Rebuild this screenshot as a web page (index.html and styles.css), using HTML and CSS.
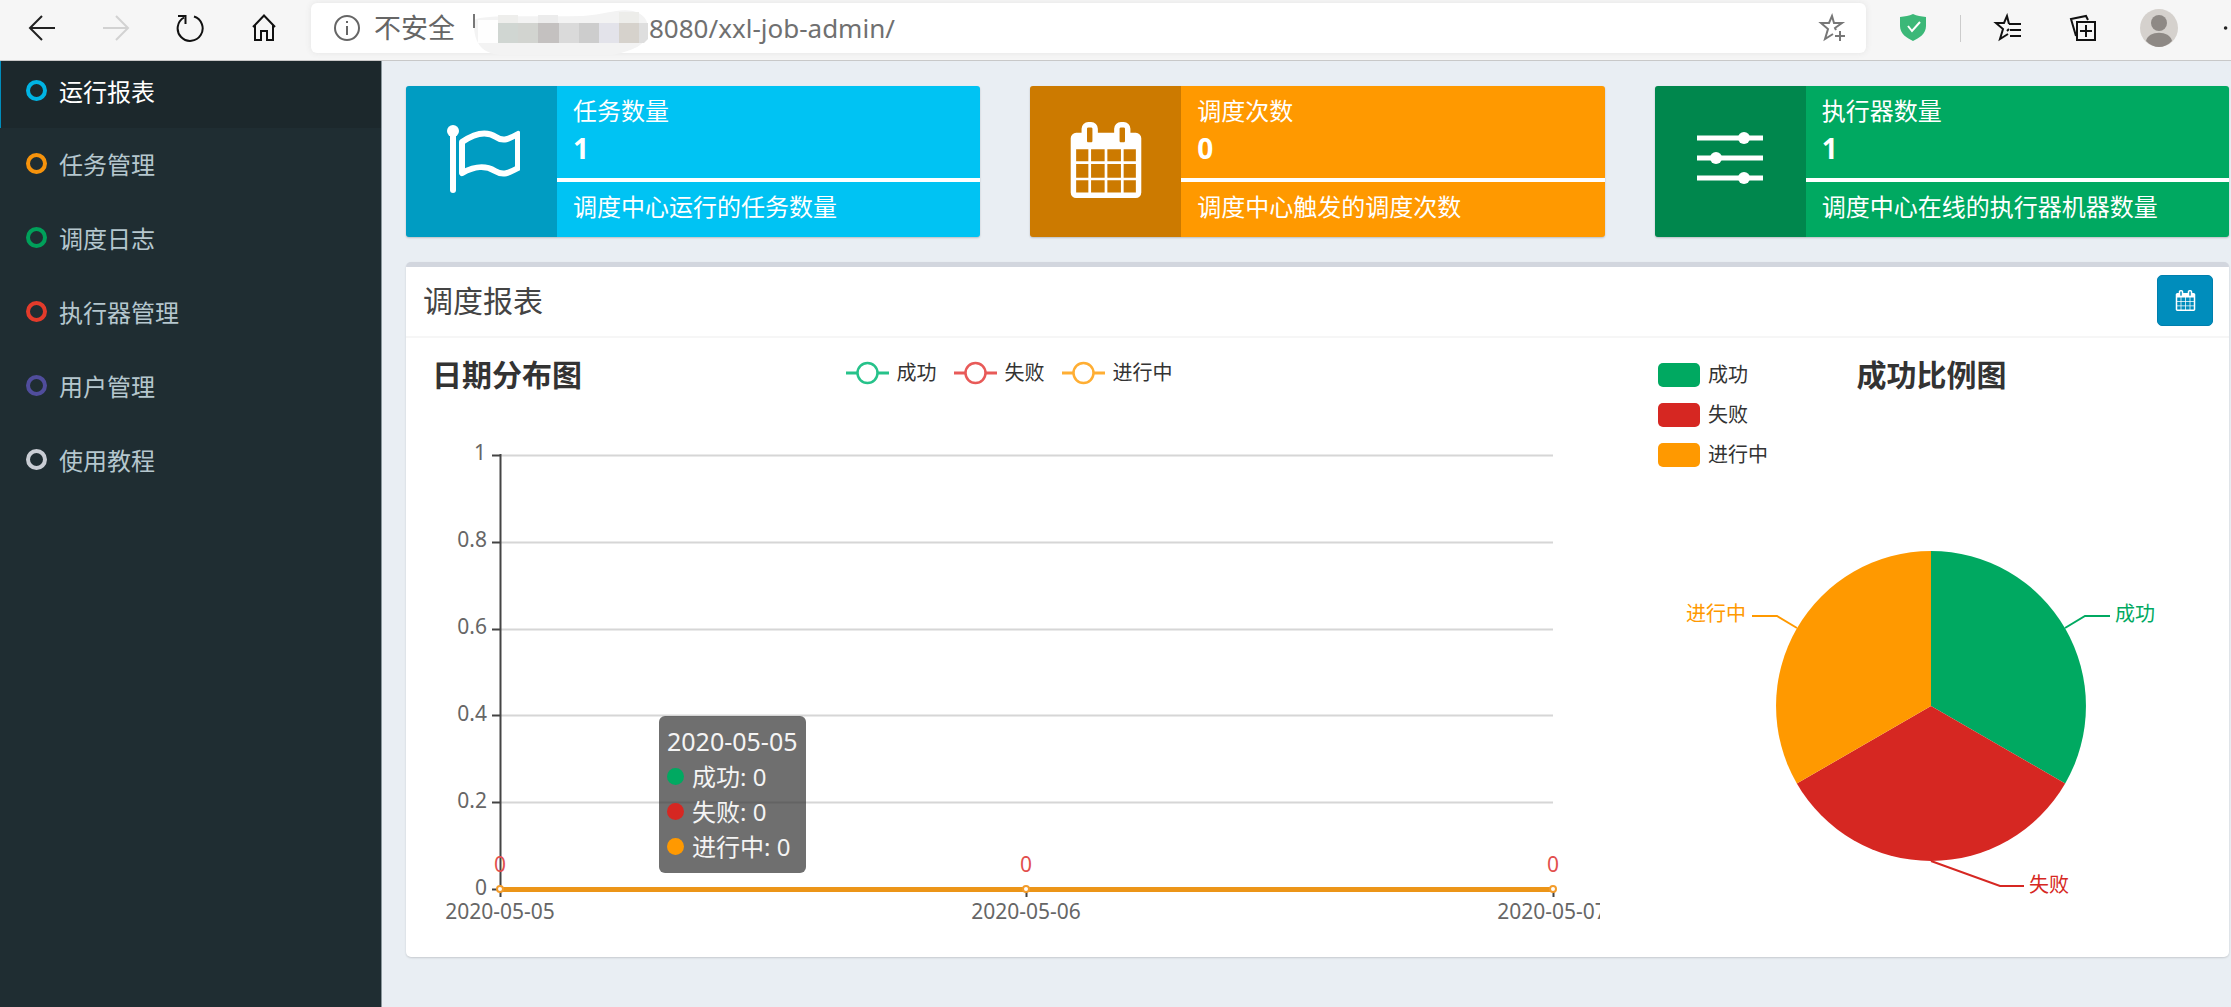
FILE: index.html
```html
<!DOCTYPE html>
<html lang="zh-CN">
<head>
<meta charset="utf-8">
<title>任务调度中心</title>
<link rel="stylesheet" href="styles.css">
</head>
<body>
<header class="toolbar">
  <nav class="toolbar-nav" aria-label="浏览器">
    <button class="tool" type="button" aria-label="后退"><svg width="30" height="30" viewBox="0 0 30 30"><path d="M28 15H3M15 3L3 15l12 12" stroke="#222" stroke-width="2"/></svg></button>
    <button class="tool" type="button" aria-label="前进" disabled><svg width="30" height="30" viewBox="0 0 30 30"><path d="M2 15h25M15 3l12 12-12 12" stroke="#d2d2d2" stroke-width="2"/></svg></button>
    <button class="tool" type="button" aria-label="刷新"><svg width="30" height="30" viewBox="0 0 30 30"><path d="M19 3.500A12.500 12.500 0 1 1 9 4.500M3 3h7.500v8" stroke="#111" stroke-width="2"/></svg></button>
    <button class="tool" type="button" aria-label="主页"><svg width="30" height="30" viewBox="0 0 30 30"><path d="M4 14L15 2.500 26 14M6 12v15h6v-9h6v9h6V12" stroke="#111" stroke-width="2"/></svg></button>
  </nav>
  <div class="address">
    <svg class="info" width="28" height="28" viewBox="0 0 28 28"><circle cx="14" cy="14" r="12" stroke="#666" stroke-width="2"/><path d="M14 12v9M14 7v2" stroke="#666" stroke-width="2"/></svg>
    <label class="address-label" for="url">不安全</label>
    <svg class="host" width="176" height="56" viewBox="0 0 176 56">
      <path d="M1 21C2 14 60 17 110 16 135 14 145 8 160 11 172 14 176 22 175 32 173 46 160 50 140 55H28C10 54 0 44 1 21z" fill="#f3f3f3"/>
      <path d="M5 20h20v23H5z" fill="#fefefe"/><path d="M1 14v14" stroke="#777" stroke-width="2"/>
      <path d="M25 15h20v8H25z" fill="#eeeeec"/><path d="M65 15h20v8H65z" fill="#ececec"/><path d="M146 12h20v11h-20z" fill="#ededea"/>
      <path d="M25 23h20v20H25z" fill="#d0d6d2"/><path d="M45 23h20v20H45z" fill="#d2d4d0"/><path d="M65 23h21v20H65z" fill="#c4c1c0"/><path d="M86 23h20v20H86z" fill="#dadada"/><path d="M106 23h20v20h-20z" fill="#cdcdcd"/><path d="M126 23h20v20h-20z" fill="#e3e3ea"/><path d="M146 23h20v20h-20z" fill="#d6d2cc"/><path d="M166 23h9v16l-4 4h-5z" fill="#dedede"/>
    </svg>
    <input class="url" id="url" type="text" value="8080/xxl-job-admin/">
    <button class="tool" type="button" aria-label="收藏"><svg width="30" height="30" viewBox="0 0 30 30"><path d="M18 17l-1-2 7-5h-8L14 3l-3 7H3l7 6-3 10 8-5M22 18v10M17 23h10" stroke="#777" stroke-width="2"/></svg></button>
  </div>
  <div class="toolbar-tools">
    <button class="tool" type="button" aria-label="安全防护"><svg width="30" height="30" viewBox="0 0 30 30"><path d="M15 1c4 2 8 2 13 3v9c0 8-7 12-13 15C9 25 2 21 2 13V4c5-1 9-1 13-3z" fill="#3cb878"/><path d="M10 13l4 5 8-9" stroke="#fff" stroke-width="2"/></svg></button>
    <span class="divider"></span>
    <button class="tool" type="button" aria-label="收藏夹"><svg width="30" height="30" viewBox="0 0 30 30"><path d="M16 11h12M17 17h11M17 23h11M16 11L14 3l-3 7H3l7 6-3 10 8-5M14 18l2-2" stroke="#111" stroke-width="2"/></svg></button>
    <button class="tool tool-collections" type="button" aria-label="集锦"><svg width="30" height="30" viewBox="0 0 30 30"><path d="M9 9h18v18H9zM18 12v12M12 18h12M20 7l-2-4L3 6l5 17" stroke="#111" stroke-width="2"/></svg></button>
    <button class="tool tool-avatar" type="button" aria-label="个人资料"><svg width="38" height="38" viewBox="0 0 38 38"><circle cx="19" cy="19" r="19" fill="#d5d1cd"/><circle cx="19" cy="14" r="8" fill="#8e8985"/><path d="M6 32c2-11 24-11 26 0-8 8-18 8-26 0z" fill="#8e8985"/></svg></button>
    <button class="tool tool-more" type="button" aria-label="更多"><svg width="10" height="10" viewBox="0 0 10 10"><circle cx="4" cy="5" r="2" fill="#222"/></svg></button>
  </div>
</header>
<div class="layout">
  <nav class="sidebar" aria-label="主菜单">
    <a class="menu-item active" href="#"><span class="ring ring-aqua"></span>运行报表</a>
    <a class="menu-item" href="#"><span class="ring ring-yellow"></span>任务管理</a>
    <a class="menu-item" href="#"><span class="ring ring-green"></span>调度日志</a>
    <a class="menu-item" href="#"><span class="ring ring-red"></span>执行器管理</a>
    <a class="menu-item" href="#"><span class="ring ring-purple"></span>用户管理</a>
    <a class="menu-item" href="#"><span class="ring ring-gray"></span>使用教程</a>
  </nav>
  <main class="content">
    <section class="cards">
      <article class="card card-aqua">
        <div class="card-icon"><svg width="76" height="76" viewBox="0 0 76 76"><circle cx="9" cy="9" r="6" fill="#fff"/><path d="M9 9v59" stroke="#fff" stroke-width="6" stroke-linecap="round"/><path d="M18 20C31 11 43 9 52 15c7 5 13 2 22-3v34c-9 5-15 8-23 3-10-6-20-5-33 2z" stroke="#fff" stroke-width="6" stroke-linejoin="round"/></svg></div>
        <div class="card-body"><div class="card-title">任务数量</div><div class="card-number">1</div><div class="card-desc">调度中心运行的任务数量</div></div>
      </article>
      <article class="card card-orange">
        <div class="card-icon"><svg width="76" height="76" viewBox="0 0 1792 1792"><path fill="#fff" d="M192 1664h288v-288h-288v288zm352 0h320v-288h-320v288zm-352-352h288v-320h-288v320zm352 0h320v-320h-320v320zm-352-384h288v-288h-288v288zm736 736h320v-288h-320v288zm-384-736h320v-288h-320v288zm768 736h288v-288h-288v288zm-384-352h320v-320h-320v320zm-352-864v-288q0-13-9.500-22.500t-22.500-9.500h-64q-13 0-22.500 9.500t-9.500 22.500v288q0 13 9.500 22.500t22.500 9.500h64q13 0 22.500-9.500t9.500-22.500zm736 864h288v-320h-288v320zm-384-384h320v-288h-320v288zm384 0h288v-288h-288v288zm32-480v-288q0-13-9.500-22.500t-22.500-9.500h-64q-13 0-22.500 9.500t-9.500 22.500v288q0 13 9.500 22.500t22.500 9.500h64q13 0 22.500-9.500t9.500-22.500zm384-64v1280q0 52-38 90t-90 38h-1408q-52 0-90-38t-38-90v-1280q0-52 38-90t90-38h128v-96q0-66 47-113t113-47h64q66 0 113 47t47 113v96h384v-96q0-66 47-113t113-47h64q66 0 113 47t47 113v96h128q52 0 90 38t38 90z"/></svg></div>
        <div class="card-body"><div class="card-title">调度次数</div><div class="card-number">0</div><div class="card-desc">调度中心触发的调度次数</div></div>
      </article>
      <article class="card card-green">
        <div class="card-icon"><svg width="76" height="76" viewBox="0 0 76 76"><path d="M5 16h66M5 36h66M5 56h66" stroke="#fff" stroke-width="5"/><circle cx="52" cy="16" r="6" fill="#fff"/><circle cx="24" cy="36" r="6" fill="#fff"/><circle cx="52" cy="56" r="6" fill="#fff"/></svg></div>
        <div class="card-body"><div class="card-title">执行器数量</div><div class="card-number">1</div><div class="card-desc">调度中心在线的执行器机器数量</div></div>
      </article>
    </section>
    <section class="box">
      <div class="box-header">
        <h3 class="box-title">调度报表</h3>
        <button class="date-button" type="button" aria-label="选择日期"><svg width="21" height="21" viewBox="0 0 1792 1792"><path fill="#fff" d="M192 1664h288v-288h-288v288zm352 0h320v-288h-320v288zm-352-352h288v-320h-288v320zm352 0h320v-320h-320v320zm-352-384h288v-288h-288v288zm736 736h320v-288h-320v288zm-384-736h320v-288h-320v288zm768 736h288v-288h-288v288zm-384-352h320v-320h-320v320zm-352-864v-288q0-13-9.500-22.500t-22.500-9.500h-64q-13 0-22.500 9.500t-9.500 22.500v288q0 13 9.500 22.500t22.500 9.500h64q13 0 22.500-9.500t9.500-22.500zm736 864h288v-320h-288v320zm-384-384h320v-288h-320v288zm384 0h288v-288h-288v288zm32-480v-288q0-13-9.500-22.500t-22.500-9.500h-64q-13 0-22.500 9.500t-9.500 22.500v288q0 13 9.500 22.500t22.500 9.500h64q13 0 22.500-9.500t9.500-22.500zm384-64v1280q0 52-38 90t-90 38h-1408q-52 0-90-38t-38-90v-1280q0-52 38-90t90-38h128v-96q0-66 47-113t113-47h64q66 0 113 47t47 113v96h384v-96q0-66 47-113t113-47h64q66 0 113 47t47 113v96h128q52 0 90 38t38 90z"/></svg></button>
      </div>
      <div class="box-body">
        <div class="chart">
          <div class="line-head">
            <h4 class="chart-title">日期分布图</h4>
            <ul class="line-legend">
              <li><svg width="43" height="26" viewBox="0 0 43 26"><path d="M0 13h43" stroke="#26c28a" stroke-width="3"/><circle cx="21.500" cy="13" r="10" fill="#fff" stroke="#26c28a" stroke-width="2.500"/></svg>成功</li>
              <li><svg width="43" height="26" viewBox="0 0 43 26"><path d="M0 13h43" stroke="#e85a58" stroke-width="3"/><circle cx="21.500" cy="13" r="10" fill="#fff" stroke="#e85a58" stroke-width="2.500"/></svg>失败</li>
              <li><svg width="43" height="26" viewBox="0 0 43 26"><path d="M0 13h43" stroke="#ffae33" stroke-width="3"/><circle cx="21.500" cy="13" r="10" fill="#fff" stroke="#ffae33" stroke-width="2.500"/></svg>进行中</li>
            </ul>
          </div>
          <svg class="plot" viewBox="0 0 1175 545" role="img" aria-label="日期分布图">
            <path class="grid-lines" d="M76 60.500h1052M76 147.500h1052M76 234.500h1052M76 320.500h1052M76 407.500h1052"/>
            <path class="axis-lines" d="M75.500 59v443M67 60.500h9M67 147.500h9M67 234.500h9M67 320.500h9M67 407.500h9M67 494.500h9M601.500 494v8M1128.500 494v8"/>
            <g class="axis-text" text-anchor="end">
              <text x="61" y="65">1</text><text x="62" y="152">0.8</text><text x="62" y="239">0.6</text><text x="62" y="326">0.4</text><text x="62" y="413">0.2</text><text x="62" y="500">0</text>
            </g>
            <g class="axis-text" text-anchor="middle">
              <text x="75" y="524">2020-05-05</text><text x="601" y="524">2020-05-06</text><text x="1127" y="524">2020-05-07</text>
            </g>
            <path d="M75 494.500h1053" stroke="#ec9518" stroke-width="5"/>
            <g fill="#fff" stroke="#f39c2b" stroke-width="2"><circle cx="75" cy="494" r="3"/><circle cx="601" cy="494" r="3"/><circle cx="1128" cy="494" r="3"/></g>
            <g class="point-text" text-anchor="middle"><text x="75" y="477">0</text><text x="601" y="477">0</text><text x="1128" y="477">0</text></g>
          </svg>
          <div class="tooltip">
            <div class="tooltip-date">2020-05-05</div>
            <div><span class="dot dot-green"></span>成功: 0</div>
            <div><span class="dot dot-red"></span>失败: 0</div>
            <div><span class="dot dot-orange"></span>进行中: 0</div>
          </div>
        </div>
        <div class="chart">
          <div class="pie-head">
            <ul class="pie-legend">
              <li><span class="swatch dot-green"></span>成功</li>
              <li><span class="swatch dot-red"></span>失败</li>
              <li><span class="swatch dot-orange"></span>进行中</li>
            </ul>
            <h4 class="chart-title">成功比例图</h4>
          </div>
          <svg class="plot" viewBox="0 0 554 465" role="img" aria-label="成功比例图">
            <path d="M276 231V76A155 155 0 0 1 410.200 308.500z" fill="#00a961"/>
            <path d="M276 231L410.200 308.500A155 155 0 0 1 141.800 308.500z" fill="#d62722"/>
            <path d="M276 231L141.800 308.500A155 155 0 0 1 276 76z" fill="#ff9900"/>
            <g fill="none" stroke-width="2"><path d="M410 153l20-12h25" stroke="#00a961"/><path d="M142 153l-20-12H97" stroke="#ff9900"/><path d="M276 386l69 25h24" stroke="#d62722"/></g>
            <g class="pie-text"><text x="460" y="146" fill="#00a961">成功</text><text x="91" y="146" text-anchor="end" fill="#ff9900">进行中</text><text x="374" y="417" fill="#d62722">失败</text></g>
          </svg>
        </div>
      </div>
    </section>
  </main>
</div>
</body>
</html>
```
FILE: styles.css
```css
* { box-sizing: border-box; }

body {
  margin: 0;
  background: #e9eef3;
  color: #333;
  font-family: "Noto Sans", "Noto Sans CJK SC", sans-serif;
  font-size: 24px;
  overflow-x: hidden;
}

svg { display: block; fill: none; }
h3, h4, ul { margin: 0; padding: 0; }
ul { list-style: none; }
button { border: 0; padding: 0; background: none; }

/* browser toolbar */
.toolbar {
  display: flex;
  align-items: center;
  height: 61px;
  padding: 0 0 4px 19px;
  background: #f6f6f6;
  border-bottom: 1px solid #c8c8c8;
}
.toolbar-nav { display: flex; gap: 28px; margin-right: 24px; }
.tool { display: flex; justify-content: center; align-items: center; width: 46px; height: 46px; flex: none; }
.address {
  display: flex;
  align-items: center;
  flex: 1;
  height: 50px;
  padding: 0 10px 0 22px;
  background: #fff;
  border-radius: 6px;
  box-shadow: 0 0 6px #e4e4e4;
}
.address-label { margin: 0 18px 0 13px; font-size: 27px; color: #666; line-height: 40px; white-space: nowrap; }
.host { flex: none; }
.url {
  flex: 1;
  min-width: 0;
  padding: 0;
  border: 0;
  outline: 0;
  background: none;
  color: #707070;
  font: 26px "Noto Sans", "Noto Sans CJK SC", sans-serif;
}
.toolbar-tools { display: flex; align-items: center; margin-left: 24px; }
.divider { width: 1px; height: 27px; margin: 0 24px; background: #ccc; }
.tool-collections { margin-left: 29px; }
.tool-avatar { margin-left: 30px; }
.tool-more { width: 9px; margin-left: 40px; justify-content: flex-start; }

/* page frame */
.layout { display: flex; min-height: calc(100vh - 61px); }
.sidebar { flex: none; width: 382px; background: #1f2d32; border-right: 1px solid #8b979c; }
.menu-item {
  display: flex;
  align-items: center;
  gap: 12px;
  height: 74px;
  padding: 0 0 4px 26px;
  color: #b5c7ce;
  text-decoration: none;
}
.menu-item.active {
  height: 67px;
  padding: 0 0 8px 25px;
  border-left: 1px solid #008dbc;
  background: #1c282c;
  color: #fff;
}
.ring { width: 21px; height: 21px; border: 4px solid; border-radius: 50%; }
.ring-aqua { color: #00b4e4; }
.ring-yellow { color: #f6930c; }
.ring-green { color: #00a05a; }
.ring-red { color: #e33b2b; }
.ring-purple { color: #504d9c; }
.ring-gray { color: #c9cdd4; }

.content { flex: 1; min-width: 0; padding: 25px 2px 48px 24px; }

/* summary cards */
.cards { display: grid; grid-template-columns: repeat(3, 1fr); gap: 50px; }
.card {
  display: grid;
  grid-template-columns: 151px 1fr;
  border-radius: 3px;
  overflow: hidden;
  color: #fff;
  box-shadow: 0 1px 2px rgba(0, 0, 0, .2);
}
.card-icon {
  display: flex;
  align-items: center;
  justify-content: center;
  padding-bottom: 3px;
  background: rgba(0, 0, 0, .2);
}
.card-body { padding-top: 7px; }
.card-title { padding-left: 16px; line-height: 35px; }
.card-number { height: 50px; padding-left: 16px; font-size: 28px; font-weight: 700; line-height: 40px; }
.card-desc { padding: 0 0 5px 16px; border-top: 4px solid #fff; line-height: 50px; }
.card-aqua { background: #00c3f3; }
.card-orange { background: #ff9900; }
.card-green { background: #00a961; }

/* report box */
.box {
  margin-top: 25px;
  border-top: 5px solid #d2d6de;
  border-radius: 5px;
  background: #fff;
  box-shadow: 0 1px 2px rgba(0, 0, 0, .15);
}
.box-header {
  display: flex;
  align-items: center;
  justify-content: space-between;
  height: 71px;
  padding: 0 16px 2px 17px;
  border-bottom: 2px solid #f6f6f6;
}
.box-title { font-size: 30px; font-weight: 400; color: #444; line-height: 40px; }
.date-button {
  display: flex;
  align-items: center;
  justify-content: center;
  width: 56px;
  height: 51px;
  border: 1px solid #007fae;
  border-radius: 5px;
  background: #008dbc;
}
.box-body {
  display: grid;
  grid-template-columns: 1175fr 554fr;
  gap: 55px;
  padding: 17px 20px 17px 19px;
}
.chart { position: relative; min-width: 0; }
.chart-title { font-size: 30px; font-weight: 700; line-height: 40px; }
.line-head { display: grid; grid-template-columns: 1fr auto 1fr; height: 40px; padding: 0 4px 0 7px; }
.line-legend { display: flex; gap: 17px; font-size: 20px; line-height: 36px; }
.line-legend li { display: flex; align-items: center; gap: 8px; height: 36px; }
.line-head { padding-right: 14px; }
.plot { width: 100%; height: auto; }
.grid-lines { stroke: #d6d6d6; stroke-width: 2; }
.axis-lines { stroke: #444; stroke-width: 2; }
.axis-text { fill: #666; font-size: 21px; }
.point-text { fill: #e2504d; font-size: 21px; }
.pie-text { font-size: 20px; }
.tooltip {
  position: absolute;
  left: 234px;
  top: 361px;
  padding: 8px 8px 9px;
  border-radius: 6px;
  background: rgba(50, 50, 50, .7);
  color: #f4f4f4;
  line-height: 35px;
  white-space: nowrap;
}
.tooltip div { display: flex; align-items: center; gap: 8px; }
.tooltip .tooltip-date { font-size: 25px; }
.dot { width: 17px; height: 17px; border-radius: 50%; }
.dot-green { background: #00a961; }
.dot-red { background: #d62722; }
.dot-orange { background: #ff9900; }

.pie-head { display: grid; grid-template-columns: 1fr auto 1fr; height: 120px; padding: 0 4px 0 3px; }
.pie-legend { font-size: 20px; line-height: 40px; }
.pie-legend li { display: flex; align-items: center; gap: 8px; }
.swatch { width: 42px; height: 24px; border-radius: 5px; }
```
